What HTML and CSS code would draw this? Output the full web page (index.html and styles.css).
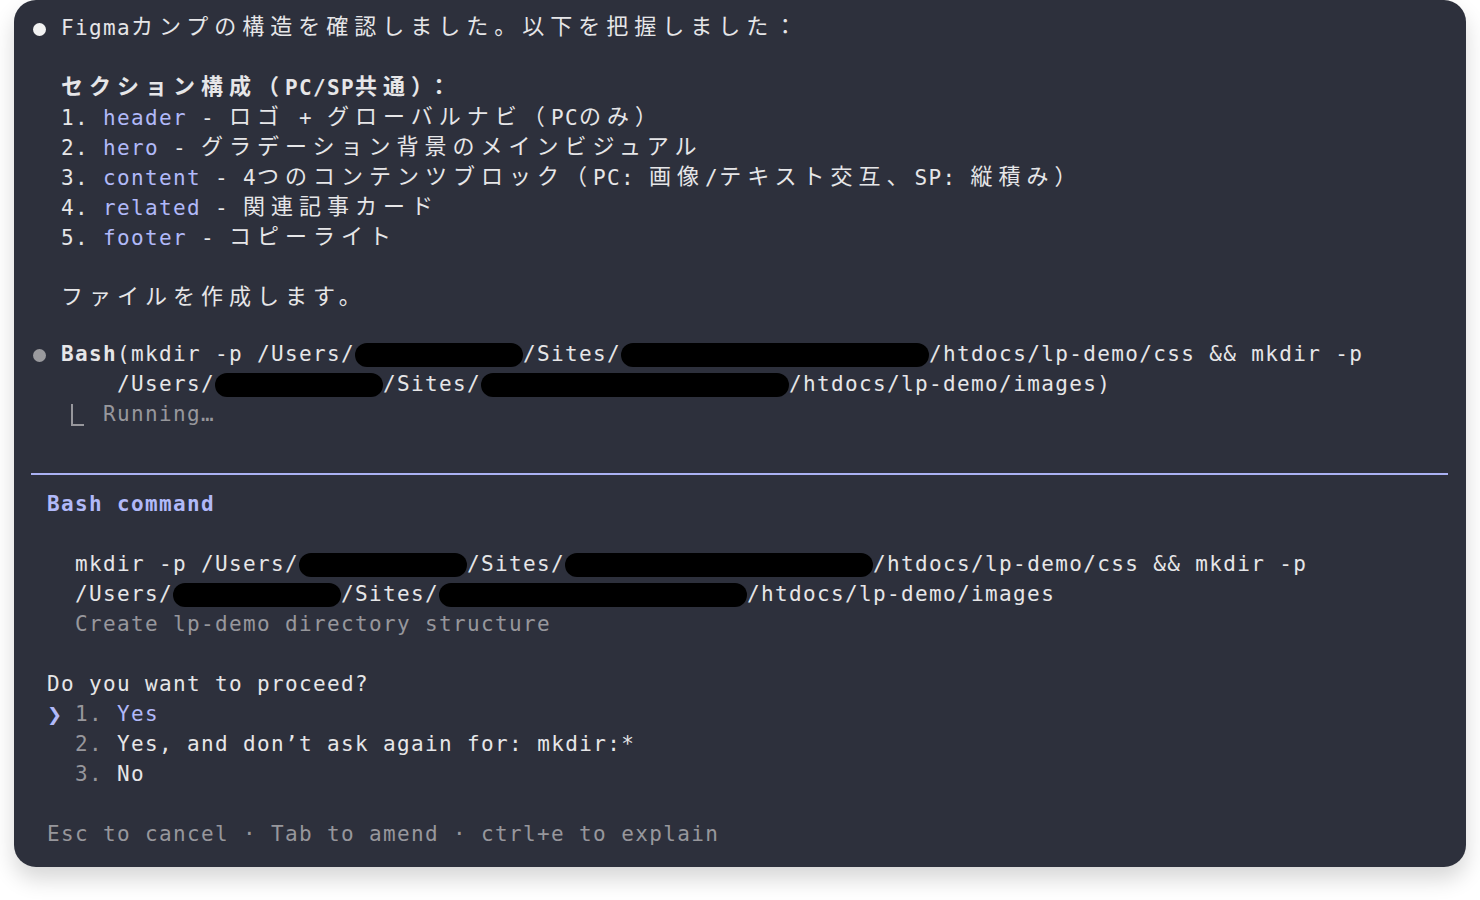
FILE: index.html
```html
<!DOCTYPE html>
<html lang="ja">
<head>
    <meta charset="UTF-8">
    <meta name="viewport" content="width=device-width, initial-scale=1.0">
    <title>Claude Code - Bash command</title>
    <link rel="stylesheet" href="styles.css">
</head>
<body>

<div class="terminal">
    <div class="line"><span class="dot"></span>Figma<span class="ja">カンプの構造を確認しました。以下を把握しました：</span></div>
    <div class="line"></div>
    <div class="line strong">  <span class="ja">セクション構成（</span>PC/SP<span class="ja">共通）：</span></div>
    <div class="line">  1. <span class="accent">header</span> - <span class="ja">ロゴ</span> + <span class="ja">グローバルナビ（</span>PC<span class="ja">のみ）</span></div>
    <div class="line">  2. <span class="accent">hero</span> - <span class="ja">グラデーション背景のメインビジュアル</span></div>
    <div class="line">  3. <span class="accent">content</span> - 4<span class="ja">つのコンテンツブロック（</span>PC: <span class="ja">画像</span>/<span class="ja">テキスト交互、</span>SP: <span class="ja">縦積み）</span></div>
    <div class="line">  4. <span class="accent">related</span> - <span class="ja">関連記事カード</span></div>
    <div class="line">  5. <span class="accent">footer</span> - <span class="ja">コピーライト</span></div>
    <div class="line"></div>
    <div class="line">  <span class="ja">ファイルを作成します。</span></div>
    <div class="line"></div>

    <!-- tool call -->
    <div class="line"><span class="dot muted"></span><b>Bash</b>(mkdir -p /Users/<span class="redact short"></span>/Sites/<span class="redact long"></span>/htdocs/lp-demo/css &amp;&amp; mkdir -p</div>
    <div class="line">      /Users/<span class="redact short"></span>/Sites/<span class="redact long"></span>/htdocs/lp-demo/images)</div>
    <div class="line">  <span class="elbow"></span><span class="dim">Running…</span></div>
    <div class="line"></div>

    <!-- permission prompt -->
    <div class="rule"></div>
    <div class="line"> <b class="accent">Bash command</b></div>
    <div class="line"></div>
    <div class="line">   mkdir -p /Users/<span class="redact short"></span>/Sites/<span class="redact long"></span>/htdocs/lp-demo/css &amp;&amp; mkdir -p</div>
    <div class="line">   /Users/<span class="redact short"></span>/Sites/<span class="redact long"></span>/htdocs/lp-demo/images</div>
    <div class="line">   <span class="dim">Create lp-demo directory structure</span></div>
    <div class="line"></div>
    <div class="line"> Do you want to proceed?</div>
    <div class="line"> <span class="accent chevron">❯</span> <span class="dim">1.</span> <span class="accent">Yes</span></div>
    <div class="line">   <span class="dim">2.</span> Yes, and don’t ask again for: mkdir:*</div>
    <div class="line">   <span class="dim">3.</span> No</div>
    <div class="line"></div>
    <div class="line dim"> Esc to cancel · Tab to amend · ctrl+e to explain</div>
</div>

</body>
</html>
```

FILE: styles.css
```css
body {
    margin: 0;
    background-color: #ffffff;
    height: 900px;
    overflow: hidden;
}
.terminal {
    margin: 0 14px;
    height: 867px;
    box-sizing: border-box;
    padding: 9px 18px 0 19px;
    background-color: #2d303c;
    border-radius: 22px;
    box-shadow: 0 12px 22px rgba(0, 0, 0, 0.16);
    color: #e6e6e8;
    font-family: "DejaVu Sans Mono", "Noto Sans CJK JP", monospace;
    font-size: 21px;
    letter-spacing: 1.36px;
    line-height: 30px;
}
.line {
    height: 30px;
    white-space: pre;
}
.ja {
    font-family: "Noto Sans CJK JP", sans-serif;
    font-size: 22px;
    letter-spacing: 6px;
    vertical-align: 1px;
}
.strong {
    font-weight: bold;
}
.accent {
    color: #b1b9f9;
}
.dim {
    color: #97979c;
}
.dot {
    display: inline-block;
    width: 28px;
    height: 13px;
    vertical-align: -1px;
}
.dot::before {
    content: "";
    display: block;
    width: 13px;
    height: 13px;
    border-radius: 50%;
    background-color: #f2f2f2;
}
.dot.muted::before {
    background-color: #9a9a9e;
}
.redact {
    display: inline-block;
    height: 24px;
    vertical-align: -6px;
    background-color: #000000;
    border-radius: 12px;
}
.redact.short {
    width: 168px;
}
.redact.long {
    width: 308px;
}
.elbow {
    display: inline-block;
    width: 11px;
    height: 20px;
    margin: 0 19px 0 10px;
    border-left: 2px solid #97979c;
    border-bottom: 2px solid #97979c;
    vertical-align: -5px;
}
.chevron {
    font-family: "DejaVu Sans", sans-serif;
    font-weight: bold;
    font-size: 18px;
    display: inline-block;
    width: 14px;
    letter-spacing: 0;
}
.rule {
    height: 2px;
    margin: 14px 0 14px -2px;
    background-color: #aab1f3;
}
```
